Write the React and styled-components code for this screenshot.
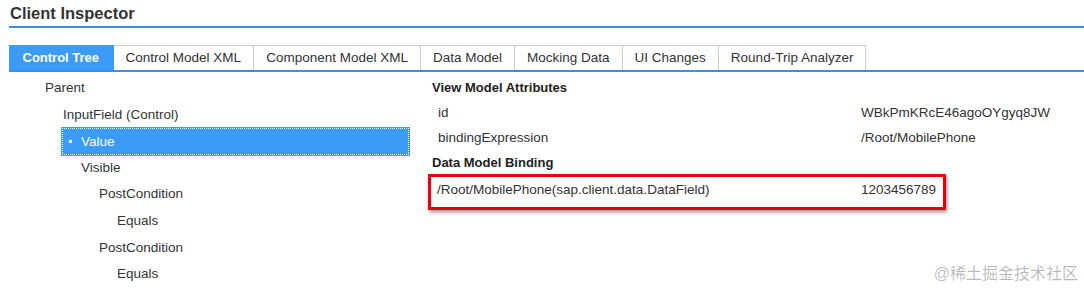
import React from "react";
import styled, { createGlobalStyle } from "styled-components";

const GlobalStyle = createGlobalStyle`
  body {
    margin: 0;
    background: #fff;
    font-family: "Liberation Sans", Arial, sans-serif;
    color: #333;
  }
`;

const tabs = [
  "Control Tree",
  "Control Model XML",
  "Component Model XML",
  "Data Model",
  "Mocking Data",
  "UI Changes",
  "Round-Trip Analyzer",
];

const tree = [
  { label: "Parent", level: 0 },
  { label: "InputField (Control)", level: 1 },
  { label: "Value", level: 2, selected: true },
  { label: "Visible", level: 2 },
  { label: "PostCondition", level: 3 },
  { label: "Equals", level: 4 },
  { label: "PostCondition", level: 3 },
  { label: "Equals", level: 4 },
];

const attributes = [
  ["id", "WBkPmKRcE46agoOYgyq8JW"],
  ["bindingExpression", "/Root/MobilePhone"],
];

export default function App() {
  return (
    <Page>
      <GlobalStyle />
      <Header>
        <Title>Client Inspector</Title>
      </Header>

      <TabBar>
        {tabs.map((t, i) => (
          <Tab key={t} active={i === 0}>
            {t}
          </Tab>
        ))}
      </TabBar>

      <Content>
        <Tree>
          {tree.map((node, i) =>
            node.selected ? (
              <SelectedNode key={i}>
                <Bullet />
                {node.label}
              </SelectedNode>
            ) : (
              <TreeNode key={i} level={node.level}>
                {node.label}
              </TreeNode>
            )
          )}
        </Tree>

        <Details>
          <Heading>View Model Attributes</Heading>
          {attributes.map(([k, v]) => (
            <AttrRow key={k}>
              <span>{k}</span>
              <span>{v}</span>
            </AttrRow>
          ))}
          <Heading>Data Model Binding</Heading>
          <BindingBox>
            <BindingRow>
              <span>/Root/MobilePhone(sap.client.data.DataField)</span>
              <span>1203456789</span>
            </BindingRow>
          </BindingBox>
        </Details>
      </Content>

      <Watermark>@稀土掘金技术社区</Watermark>
    </Page>
  );
}

const Page = styled.div`
  position: relative;
  width: 1084px;
  height: 293px;
  padding-left: 9px;
  box-sizing: border-box;
  overflow: hidden;
  font-size: 13.5px;
`;

const Header = styled.div`
  height: 26px;
  border-bottom: 2px solid #3b8fe8;
  box-sizing: content-box;
`;

const Title = styled.h1`
  margin: 0;
  padding: 4px 0 0 1px;
  font-size: 16.5px;
  line-height: 18px;
  font-weight: bold;
  color: #333;
`;

const TabBar = styled.div`
  display: flex;
  margin-top: 17px;
  border-bottom: 2px solid #3b8fe8;
`;

const Tab = styled.div`
  height: 24px;
  line-height: 24px;
  padding: 0 ${(p) => (p.active ? "13.5px" : "12px")};
  border: 1px solid #ccc;
  border-bottom: none;
  border-left: none;
  background: ${(p) => (p.active ? "#3d9bf8" : "#fff")};
  color: ${(p) => (p.active ? "#fff" : "#333")};
  font-weight: ${(p) => (p.active ? "bold" : "normal")};
  font-size: ${(p) => (p.active ? "13px" : "13.5px")};
  border-color: ${(p) => (p.active ? "#3d9bf8" : "#ccc")};
`;

const Content = styled.div`
  display: flex;
  padding-top: 3px;
`;

const Tree = styled.div`
  width: 400px;
  display: flex;
  flex-direction: column;
`;

const TreeNode = styled.div`
  height: 26.6px;
  line-height: 26.6px;
  padding-left: ${(p) => 36 + p.level * 18}px;
  white-space: nowrap;
`;

const SelectedNode = styled.div`
  height: 26.6px;
  display: flex;
  align-items: center;
  margin-left: 53px;
  padding-left: 6px;
  box-sizing: border-box;
  border: 1px dotted #fff;
  outline: 1px solid #3d9bf8;
  background: #3d9bf8;
  color: #fff;
`;

const Bullet = styled.span`
  width: 3px;
  height: 3px;
  background: #fff;
  margin-right: 9px;
`;

const Details = styled.div`
  margin-left: 23px;
  width: 640px;
  display: flex;
  flex-direction: column;
`;

const Heading = styled.div`
  height: 25px;
  line-height: 25px;
  font-size: 13px;
  font-weight: bold;
  color: #222;
`;

const AttrRow = styled.div`
  display: grid;
  grid-template-columns: 423px 1fr;
  height: 25px;
  line-height: 25px;
  padding-left: 6px;
`;

const BindingBox = styled.div`
  width: 518px;
  margin-left: -4px;
  margin-top: -1px;
  border: 3px solid #e8000c;
  box-sizing: border-box;
  box-shadow: 1px 2px 4px rgba(0, 0, 0, 0.45);
`;

const BindingRow = styled.div`
  display: grid;
  grid-template-columns: 424px 1fr;
  height: 30px;
  line-height: 26px;
  padding-left: 6px;
`;

const Watermark = styled.div`
  position: absolute;
  right: 6px;
  bottom: 9px;
  font-family: "Liberation Sans", "Noto Sans CJK SC", sans-serif;
  font-size: 16px;
  color: rgba(0, 0, 0, 0.28);
`;
